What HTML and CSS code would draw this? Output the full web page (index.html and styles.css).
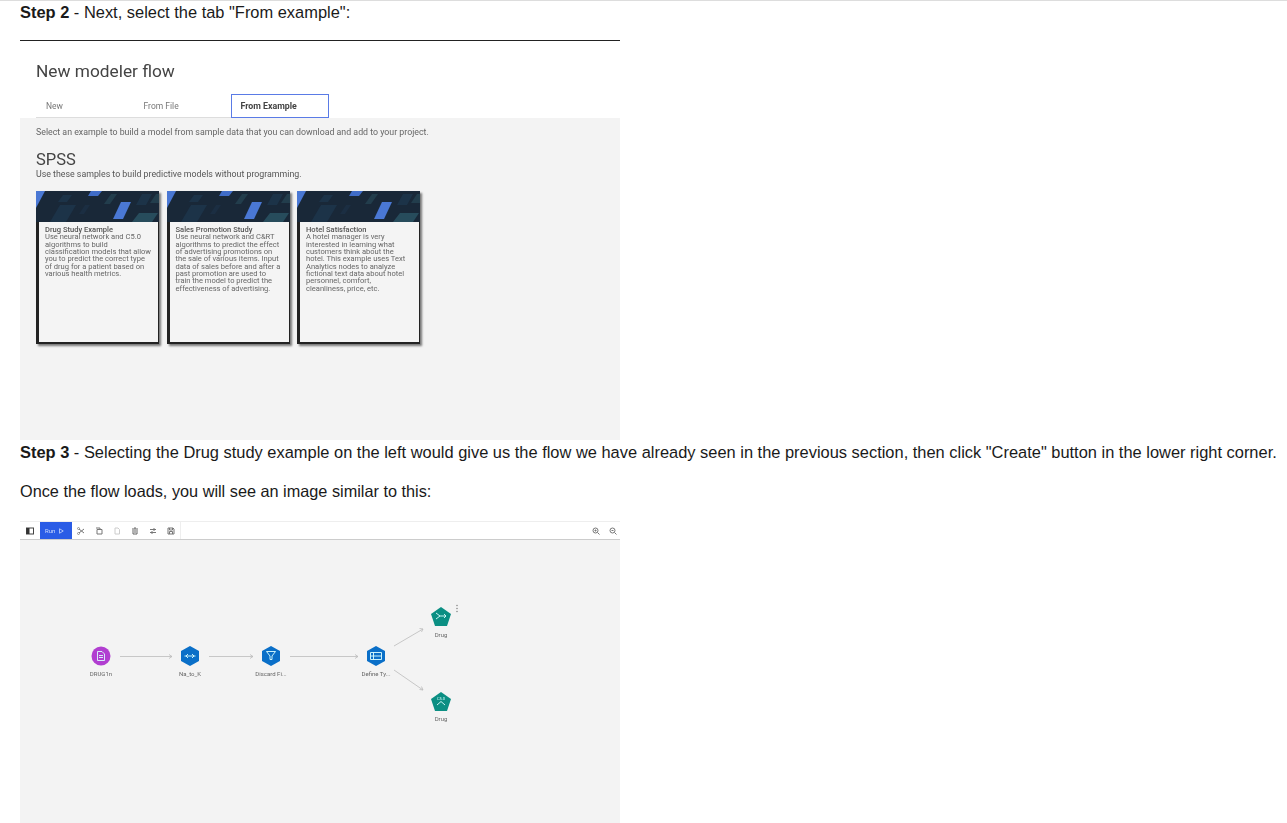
FILE: index.html
```html
<!DOCTYPE html>
<html lang="en">
<head>
  <meta charset="UTF-8">
  <meta name="viewport" content="width=device-width, initial-scale=1.0">
  <title>Drug study flow</title>
  <link rel="stylesheet" href="styles.css">
</head>
<body>
  <svg class="defs" width="0" height="0">
    <symbol id="banner" viewBox="0 0 123 31">
      <rect width="123" height="31" fill="#192838"/>
      <polygon points="14,31 24,14 40,14 30,31" fill="#1c3348"/>
      <polygon points="22,11 27,4 36,4 31,11" fill="#1c3348"/>
      <polygon points="43,23 49,14 54,14 48,23" fill="#1b2e42"/>
      <polygon points="68,13 75,3 81,3 74,13" fill="#223d4c"/>
      <polygon points="100,14 106,3 116,3 110,14" fill="#1c3348"/>
      <polygon points="114,12 120,3 123,3 123,12" fill="#223d4c"/>
      <polygon points="96,31 103,22 122,22 116,31" fill="#274c5c"/>
      <polygon points="0,0 9,0 0,17" fill="#4a78d4"/>
      <polygon points="55,0 66,0 62,5 52,5" fill="#3f6cc8"/>
      <polygon points="85,11 95,11 87,28 77,28" fill="#4a78d4"/>
    </symbol>
  </svg>

  <main class="page">
    <p class="step"><b>Step 2</b> - Next, select the tab "From example":</p>
    <hr class="rule">

    <section class="shot modeler">
      <header class="modeler-head">
        <h2>New modeler flow</h2>
        <div class="tabs">
          <span class="tab">New</span>
          <span class="tab">From File</span>
          <span class="tab tab-active">From Example</span>
        </div>
      </header>
      <div class="panel">
        <p class="hint">Select an example to build a model from sample data that you can download and add to your project.</p>
        <h3>SPSS</h3>
        <p class="sub">Use these samples to build predictive models without programming.</p>
        <div class="cards">
          <article class="card">
            <svg class="card-top"><use href="#banner"/></svg>
            <div class="card-text">
              <b>Drug Study Example</b><br>
              Use neural network and C5.0<br>algorithms to build<br>classification models that allow<br>you to predict the correct type<br>of drug for a patient based on<br>various health metrics.
            </div>
          </article>
          <article class="card">
            <svg class="card-top"><use href="#banner"/></svg>
            <div class="card-text">
              <b>Sales Promotion Study</b><br>
              Use neural network and C&amp;RT<br>algorithms to predict the effect<br>of advertising promotions on<br>the sale of various items. Input<br>data of sales before and after a<br>past promotion are used to<br>train the model to predict the<br>effectiveness of advertising.
            </div>
          </article>
          <article class="card">
            <svg class="card-top"><use href="#banner"/></svg>
            <div class="card-text">
              <b>Hotel Satisfaction</b><br>
              A hotel manager is very<br>interested in learning what<br>customers think about the<br>hotel. This example uses Text<br>Analytics nodes to analyze<br>fictional text data about hotel<br>personnel, comfort,<br>cleanliness, price, etc.
            </div>
          </article>
        </div>
      </div>
    </section>

    <p class="step step-three"><b>Step 3</b> - Selecting the Drug study example on the left would give us the flow we have already seen in the previous section, then click "Create" button in the lower right corner.</p>
    <p class="step step-four">Once the flow loads, you will see an image similar to this:</p>

    <section class="shot flow">
      <div class="toolbar">
        <span class="tool">
          <svg viewBox="0 0 8 8"><rect x=".5" y="1" width="7" height="6" fill="none" stroke="#444"/><rect x=".5" y="1" width="3" height="6" fill="#333"/></svg>
        </span>
        <span class="run">Run
          <svg viewBox="0 0 8 8"><path d="M2 1l5 3-5 3z" fill="none" stroke="#cfdcff"/></svg>
        </span>
        <span class="tool">
          <svg viewBox="0 0 8 8"><path d="M2 2l5 4M2 6l5-4" fill="none" stroke="#777"/><circle cx="1.500" cy="1.500" r="1" fill="none" stroke="#777" stroke-width=".7"/><circle cx="1.500" cy="6.500" r="1" fill="none" stroke="#777" stroke-width=".7"/></svg>
        </span>
        <span class="tool">
          <svg viewBox="0 0 8 8"><path d="M1 1h4v1M2 2.500h5v4.500h-5z" fill="none" stroke="#777"/></svg>
        </span>
        <span class="tool">
          <svg viewBox="0 0 8 8"><path d="M2 1h3l1.500 1.500v4.500h-4.500z" fill="none" stroke="#ccc"/></svg>
        </span>
        <span class="tool">
          <svg viewBox="0 0 8 8"><path d="M1 2h6M3 1h2M2 3v4h4v-4M4 3v3" fill="none" stroke="#666"/></svg>
        </span>
        <span class="tool">
          <svg viewBox="0 0 8 8"><path d="M1 2.500h6M1 5.500h6M5 1v3M3 4v3" fill="none" stroke="#777"/></svg>
        </span>
        <span class="tool tool-last">
          <svg viewBox="0 0 8 8"><path d="M1 1h5l1 1v5h-6zM2.500 1v2h3v-2M2.500 7v-2.500h3v2.500" fill="none" stroke="#777"/></svg>
        </span>
        <span class="zooms">
          <svg viewBox="0 0 8 8"><circle cx="3.500" cy="3.500" r="2.500" fill="none" stroke="#777"/><path d="M5.500 5.500l2 2M2.500 3.500h2M3.500 2.500v2" stroke="#777" fill="none"/></svg>
          <svg viewBox="0 0 8 8"><circle cx="3.500" cy="3.500" r="2.500" fill="none" stroke="#777"/><path d="M5.500 5.500l2 2M2.500 3.500h2" stroke="#777" fill="none"/></svg>
        </span>
      </div>

      <svg class="canvas" viewBox="20 539 600 284">
        <g class="links">
          <path d="M120 655.500H172M209 655.500H253M290 655.500H358M394 645L423 628M394 669L423 689"/>
          <path d="M169 653.500l3 2-3 2M250 653.500l3 2-3 2M355 653.500l3 2-3 2M419.500 627.500l3.500.5-1.500 3M421.500 685.500l1.500 3.500-3.500-.5"/>
        </g>

        <circle cx="101" cy="655" r="9.500" fill="#b13ed0"/>
        <path d="M97.500 650.500h4.500l2.500 2.500v6.500h-7zM99 654.500h4M99 656.500h4" class="glyph"/>

        <polygon points="190,645 199,650 199,660 190,665 181,660 181,650" fill="#0a6fc8"/>
        <path d="M184.500 655h11M188 653l-2 2 2 2M192 653l2 2-2 2" class="glyph"/>

        <polygon points="271,645 280,650 280,660 271,665 262,660 262,650" fill="#0a6fc8"/>
        <path d="M266.500 650.500h9l-3.500 4.500v3.500h-2v-3.500z" class="glyph"/>

        <polygon points="376,645 385,650 385,660 376,665 367,660 367,650" fill="#0a6fc8"/>
        <path d="M370.500 651.500h11v7h-11zM370.500 655h11M373.500 651.500v7" class="glyph"/>

        <polygon points="441,606 451,613 447,625 435,625 431,613" fill="#0b8f83"/>
        <path d="M436 612l4 3-4 3M440 615h6M444 613l2 2-2 2" class="glyph"/>

        <polygon points="441,691 451,698 447,710 435,710 431,698" fill="#0b8f83"/>
        <path d="M437 704l4-3.500 4 3.500" class="glyph"/>
        <text x="441" y="698.500" class="mini">C5.0</text>

        <circle cx="457" cy="604.500" r=".7" fill="#777"/>
        <circle cx="457" cy="607.500" r=".7" fill="#777"/>
        <circle cx="457" cy="610.500" r=".7" fill="#777"/>

        <text x="101" y="675" class="node-label">DRUG1n</text>
        <text x="190" y="675" class="node-label">Na_to_K</text>
        <text x="271" y="675" class="node-label">Discard Fi...</text>
        <text x="376" y="675" class="node-label">Define Ty...</text>
        <text x="441" y="636" class="node-label">Drug</text>
        <text x="441" y="720" class="node-label">Drug</text>
      </svg>
    </section>
  </main>
</body>
</html>
```

FILE: styles.css
```css
body { margin: 0; background: #fff; color: #1a1a1a; font-family: "Liberation Sans", Arial, sans-serif; }
.defs { position: absolute; }
.page { border-top: 1px solid #ddd; padding: 1px 20px 0; overflow: hidden; height: 823px; box-sizing: border-box; }

.step { margin: 0; font-size: 16.430px; line-height: 20px; white-space: nowrap; }
.step-three { margin-top: 2px; }
.step-four { margin-top: 19px; font-size: 16.270px; }
.rule { width: 600px; height: 1px; margin: 18px 0 0; border: none; background: #222; }

.shot { width: 600px; filter: blur(0.4px); font-family: Roboto, "Liberation Sans", sans-serif; }
.flow { margin-top: 20px; }

.modeler-head { height: 77px; padding: 20px 0 0 16px; box-sizing: border-box; }
.modeler-head h2 { margin: 0; font-size: 17.300px; line-height: 20px; font-weight: 400; color: #444; }
.tabs { display: flex; margin-top: 13px; height: 24px; }
.tab { width: 97.500px; box-sizing: border-box; padding-left: 10px; font-size: 8.500px; line-height: 25px; color: #777; border-bottom: 1px solid #ddd; }
.tab-active { border: 1.500px solid #5a7be6; padding-left: 8.500px; line-height: 22px; font-size: 8.800px; font-weight: 700; color: #444; }

.panel { height: 322px; padding: 8px 16px 0; box-sizing: border-box; background: #f3f3f3; }
.hint, .sub { margin: 0; font-size: 8.800px; line-height: 12px; color: #666; white-space: nowrap; }
.panel h3 { margin: 13px 0 0; font-size: 16.500px; line-height: 17px; font-weight: 400; color: #444; }
.sub { color: #555; }

.cards { display: flex; gap: 7.500px; margin-top: 11px; }
.card { width: 123px; height: 153px; box-sizing: border-box; background: #222; box-shadow: 2px 2px 2px #777; }
.card-top { display: block; width: 123px; height: 31px; }
.card-text { height: 120px; box-sizing: border-box; margin-left: 3px; margin-right: 1px; padding: 4px 0 0 6px; background: #f4f4f4; font-size: 7.550px; line-height: 7.350px; color: #666; white-space: nowrap; }
.card-text b { font-weight: 500; color: #555; }

.toolbar { display: flex; align-items: center; height: 17px; border-top: 1px solid #eee; border-bottom: 1px solid #ccc; background: #fff; }
.tool { display: flex; align-items: center; justify-content: center; width: 18px; height: 17px; }
.tool svg { width: 8px; height: 8px; }
.tool:first-child { width: 20px; }
.tool-last { border-right: 1px solid #eee; }
.run { display: flex; align-items: center; gap: 3px; width: 32px; height: 17px; padding-left: 5px; box-sizing: border-box; background: #2a5ce6; color: #cfdcff; font-size: 6px; }
.run svg { width: 6px; height: 6px; }
.zooms { display: flex; gap: 9px; margin-left: auto; padding-right: 3px; }
.zooms svg { width: 8px; height: 8px; }

.canvas { display: block; width: 600px; height: 284px; background: #f3f3f3; }
.links path { fill: none; stroke: #bbb; stroke-width: 0.800; }
.glyph { fill: none; stroke: #dff; stroke-width: 0.900; }
.mini { font-size: 4px; fill: #dff; text-anchor: middle; }
.node-label { font-size: 6px; fill: #666; text-anchor: middle; }
```
